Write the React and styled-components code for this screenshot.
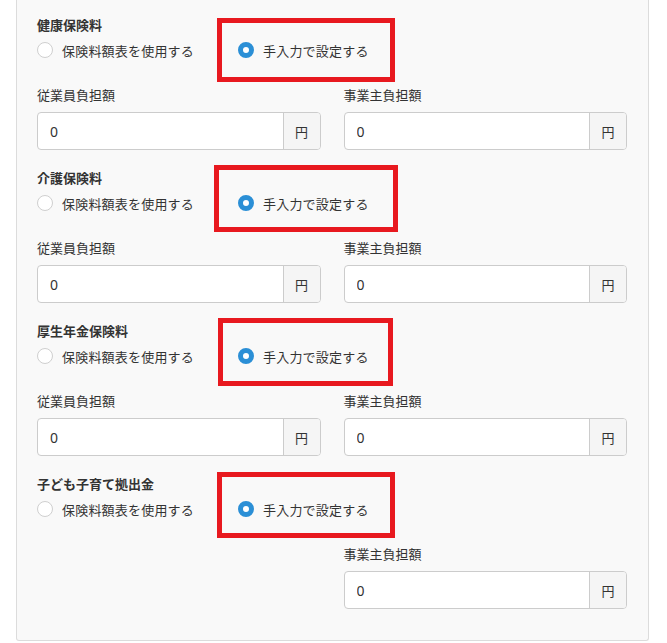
import React from 'react';
import styled, { createGlobalStyle } from 'styled-components';

const GlobalStyle = createGlobalStyle`
  body {
    margin: 0;
    background: #fff;
    font-family: "Noto Sans CJK JP", "Noto Sans", sans-serif;
    color: #333;
  }
`;

const Panel = styled.div`
  margin-left: 16px;
  width: 590px;
  padding: 16px 21px 31px 20px;
  background: #f9f9f9;
  border: 1px solid #dcdcdc;
  border-top: none;
  border-radius: 0 0 3px 3px;
  display: flex;
  flex-direction: column;
  gap: 19px;
`;

const Section = styled.section`
  position: relative;
`;

const Heading = styled.h3`
  margin: 0;
  font-size: 13px;
  line-height: 18px;
  font-weight: bold;
  color: #333;
`;

const RadioRow = styled.div`
  margin-top: 6px;
  display: grid;
  grid-template-columns: 201px auto;
  height: 20px;
  align-items: center;
`;

const Option = styled.label`
  display: flex;
  align-items: center;
  gap: 9px;
  font-size: 13px;
  letter-spacing: 0.2px;
  color: #333;
  white-space: nowrap;
`;

const Radio = styled.span`
  box-sizing: border-box;
  width: 16px;
  height: 16px;
  border-radius: 50%;
  background: #fff;
  border: ${p => (p.$checked ? '5px solid #2b8fd6' : '1px solid #cfcfcf')};
`;

const Fields = styled.div`
  margin-top: 26px;
  display: grid;
  grid-template-columns: 1fr 1fr;
  column-gap: 23px;
`;

const Field = styled.div`
  grid-column: ${p => p.$col};
  display: flex;
  flex-direction: column;
  gap: 8px;
`;

const Label = styled.div`
  font-size: 13px;
  line-height: 18px;
  color: #333;
`;

const InputGroup = styled.div`
  display: flex;
  height: 38px;
  box-sizing: border-box;
  border: 1px solid #cccccc;
  border-radius: 4px;
  background: #fff;
  overflow: hidden;
`;

const Input = styled.input`
  flex: 1;
  min-width: 0;
  border: none;
  outline: none;
  padding: 0 12px;
  font-family: "Noto Sans", "Noto Sans CJK JP", sans-serif;
  font-size: 14px;
  color: #333;
  background: transparent;
`;

const Addon = styled.span`
  width: 36px;
  display: flex;
  align-items: center;
  justify-content: center;
  background: #f5f5f5;
  border-left: 1px solid #cccccc;
  font-size: 13px;
  color: #333;
`;

const Highlight = styled.div`
  position: absolute;
  box-sizing: border-box;
  border: 5px solid #e8191f;
  pointer-events: none;
`;

const sections = [
  { title: '健康保険料', employee: true, box: { top: 2, left: 180, width: 178, height: 64 } },
  { title: '介護保険料', employee: true, box: { top: -4, left: 177, width: 184, height: 67 } },
  { title: '厚生年金保険料', employee: true, box: { top: -4, left: 181, width: 175, height: 68 } },
  { title: '子ども子育て拠出金', employee: false, box: { top: -3, left: 180, width: 178, height: 66 } },
];

const MoneyField = ({ label, col }) => (
  <Field $col={col}>
    <Label>{label}</Label>
    <InputGroup>
      <Input defaultValue="0" />
      <Addon>円</Addon>
    </InputGroup>
  </Field>
);

export default function App() {
  return (
    <>
      <GlobalStyle />
      <Panel>
        {sections.map(s => (
          <Section key={s.title}>
            <Heading>{s.title}</Heading>
            <RadioRow>
              <Option>
                <Radio />
                保険料額表を使用する
              </Option>
              <Option>
                <Radio $checked />
                手入力で設定する
              </Option>
            </RadioRow>
            <Fields>
              {s.employee && <MoneyField label="従業員負担額" col={1} />}
              <MoneyField label="事業主負担額" col={2} />
            </Fields>
            <Highlight style={s.box} />
          </Section>
        ))}
      </Panel>
    </>
  );
}
